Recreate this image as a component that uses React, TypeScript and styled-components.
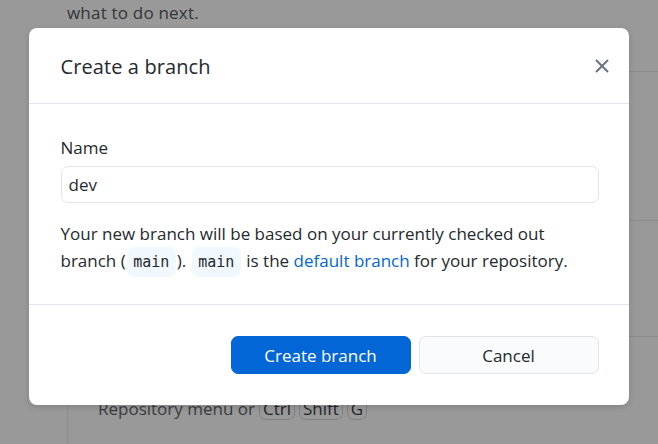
import React from "react";
import styled, { createGlobalStyle } from "styled-components";

const GlobalStyle = createGlobalStyle`
  html, body { margin: 0; padding: 0; background: #ffffff; }
  body {
    font-family: "Open Sans", "Noto Sans", sans-serif;
    color: #24292e;
  }
  * { box-sizing: border-box; }
`;

const Screen = styled.div`
  position: relative;
  width: 658px;
  height: 444px;
  overflow: hidden;
  background: #ffffff;
`;

const AppContent = styled.div`
  display: flex;
  flex-direction: column;
  padding-left: 67px;
  height: 100%;
`;

const IntroText = styled.p`
  margin: 0;
  padding-top: 2px;
  font-size: 17px;
  line-height: 22px;
  letter-spacing: 0.2px;
  color: #555a60;
`;

const SuggestionList = styled.div`
  margin-top: 47px;
  border-left: 1px solid #e6e6e6;
  border-top: 1px solid #e6e6e6;
  flex: 1;
  display: flex;
  flex-direction: column;
`;

const SuggestionRow = styled.div<{ $h: number }>`
  height: ${(p) => p.$h}px;
  border-bottom: 1px solid #e6e6e6;
  padding: 0 30px;
  display: flex;
  flex-direction: column;
  justify-content: flex-end;
  flex-shrink: 0;
`;

const SuggestionHint = styled.div`
  font-size: 17px;
  color: #5f656c;
  display: flex;
  align-items: center;
  gap: 4px;
  padding-bottom: 26px;
`;

const Kbd = styled.span`
  display: inline-block;
  border: 1px solid #d1d5da;
  border-radius: 7px;
  padding: 0 3px;
  font-size: 17px;
  line-height: 21px;
  color: #3a3f45;
`;

const Overlay = styled.div`
  position: absolute;
  inset: 0;
  background: rgba(0, 0, 0, 0.4);
  display: flex;
  justify-content: center;
  align-items: flex-start;
  padding-top: 28px;
`;

const Dialog = styled.div`
  width: 600px;
  margin-left: -1px;
  background: #ffffff;
  border-radius: 8px;
  box-shadow: 0 2px 6px rgba(0, 0, 0, 0.15);
  display: flex;
  flex-direction: column;
`;

const Header = styled.div`
  height: 76px;
  padding: 2px 16px 0 32px;
  display: flex;
  align-items: center;
  justify-content: space-between;
  border-bottom: 1px solid #e1e4e8;
`;

const Title = styled.h1`
  margin: 0;
  font-size: 20px;
  font-weight: 400;
  letter-spacing: 0.1px;
  color: #24292e;
`;

const CloseButton = styled.button`
  border: 0;
  background: transparent;
  padding: 4px;
  margin-top: -2px;
  display: flex;
  color: #6a737d;
  cursor: pointer;
`;

const Body = styled.div`
  padding: 33px 30px 30px 32px;
  display: flex;
  flex-direction: column;
  border-bottom: 1px solid #e1e4e8;
`;

const Label = styled.label`
  font-size: 17px;
  line-height: 22px;
  color: #24292e;
  margin-bottom: 7px;
`;

const TextInput = styled.input`
  height: 37px;
  width: 100%;
  border: 1px solid #e1e4e8;
  border-radius: 7px;
  padding: 0 7px;
  font-family: inherit;
  font-size: 17px;
  color: #24292e;
  outline: none;
`;

const Description = styled.p`
  margin: 17px 0 0;
  font-size: 17px;
  line-height: 27px;
  color: #24292e;
`;

const Code = styled.code`
  font-family: "DejaVu Sans Mono", "Liberation Mono", monospace;
  font-size: 15px;
  line-height: 18px;
  background: #f1f8ff;
  border-radius: 7px;
  padding: 6px 6.5px;
  margin: 0 1px;
  color: #24292e;
`;

const Link = styled.a`
  color: #0366d6;
  text-decoration: none;
`;

const Footer = styled.div`
  padding: 31px 30px 31px 32px;
  display: flex;
  justify-content: flex-end;
  gap: 8px;
`;

const Button = styled.button<{ $primary?: boolean }>`
  width: 180px;
  height: 38px;
  border-radius: 7px;
  font-family: inherit;
  font-size: 17px;
  cursor: pointer;
  border: 1px solid ${(p) => (p.$primary ? "#0366d6" : "#e1e4e8")};
  background: ${(p) => (p.$primary ? "#0366d6" : "#fafbfc")};
  color: ${(p) => (p.$primary ? "#ffffff" : "#24292e")};
`;

export default function App() {
  return (
    <>
      <GlobalStyle />
      <Screen>
        <AppContent>
          <IntroText>what to do next.</IntroText>
          <SuggestionList>
            <SuggestionRow $h={149} />
            <SuggestionRow $h={116} />
            <SuggestionRow $h={110}>
              <SuggestionHint>
                Repository menu or <Kbd>Ctrl</Kbd>
                <Kbd>Shift</Kbd>
                <Kbd>G</Kbd>
              </SuggestionHint>
            </SuggestionRow>
          </SuggestionList>
        </AppContent>
        <Overlay>
          <Dialog>
            <Header>
              <Title>Create a branch</Title>
              <CloseButton aria-label="Close">
                <svg width="14" height="14" viewBox="0 0 14 14">
                  <path
                    d="M1 1 L13 13 M13 1 L1 13"
                    stroke="currentColor"
                    strokeWidth="2"
                  />
                </svg>
              </CloseButton>
            </Header>
            <Body>
              <Label>Name</Label>
              <TextInput defaultValue="dev" />
              <Description>
                Your new branch will be based on your currently checked out branch (
                <Code>main</Code>). <Code>main</Code> is the{" "}
                <Link href="#">default branch</Link> for your repository.
              </Description>
            </Body>
            <Footer>
              <Button $primary>Create branch</Button>
              <Button>Cancel</Button>
            </Footer>
          </Dialog>
        </Overlay>
      </Screen>
    </>
  );
}
